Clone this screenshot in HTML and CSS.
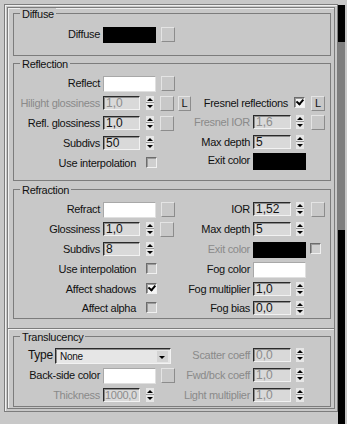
FILE: index.html
```html
<!DOCTYPE html>
<html>
<head>
<meta charset="utf-8">
<link rel="stylesheet" href="styles.css">
</head>
<body>
<div class="page">
  <div class="panel">
    <div class="outer">
      <div class="inner">

        <section class="group g-diffuse">
          <div class="legend">Diffuse</div>
          <div class="rows">
            <div class="cell"><span class="lab w86">Diffuse</span><span class="swatch black"></span><span class="mapbtn ml5"></span></div>
            <div class="cell"></div>
          </div>
        </section>

        <section class="group g-refl">
          <div class="legend">Reflection</div>
          <div class="rows">
            <div class="cell"><span class="lab w86">Reflect</span><span class="swatch white"></span><span class="mapbtn ml5"></span></div>
            <div class="cell"></div>

            <div class="cell"><span class="lab w86 dis">Hilight glossiness</span><span class="field dis">1,0</span><span class="spin ml6"></span><span class="mapbtn ml6"></span><span class="lbtn">L</span></div>
            <div class="cell"><span class="lab w95">Fresnel reflections</span><span class="cb checked ml6"></span><span class="lbtn r">L</span></div>

            <div class="cell"><span class="lab w86">Refl. glossiness</span><span class="field">1,0</span><span class="spin ml6"></span><span class="mapbtn ml6"></span></div>
            <div class="cell up1"><span class="lab w57 dis">Fresnel IOR</span><span class="field r dis">1,6</span><span class="spin ml5"></span><span class="mapbtn ml7"></span></div>

            <div class="cell"><span class="lab w86">Subdivs</span><span class="field">50</span><span class="spin ml6"></span></div>
            <div class="cell up1"><span class="lab w57">Max depth</span><span class="field r">5</span><span class="spin ml5"></span></div>

            <div class="cell"><span class="lab w122">Use interpolation</span><span class="cb ml10"></span></div>
            <div class="cell up3"><span class="lab w57">Exit color</span><span class="swatch black tall"></span></div>
          </div>
        </section>

        <section class="group g-refr">
          <div class="legend">Refraction</div>
          <div class="rows">
            <div class="cell"><span class="lab w86">Refract</span><span class="swatch white"></span><span class="mapbtn ml5"></span></div>
            <div class="cell"><span class="lab w57">IOR</span><span class="field r">1,52</span><span class="spin ml5"></span><span class="mapbtn ml7"></span></div>

            <div class="cell"><span class="lab w86">Glossiness</span><span class="field">1,0</span><span class="spin ml6"></span><span class="mapbtn ml6"></span></div>
            <div class="cell"><span class="lab w57">Max depth</span><span class="field r">5</span><span class="spin ml5"></span></div>

            <div class="cell"><span class="lab w86">Subdivs</span><span class="field">8</span><span class="spin ml6"></span></div>
            <div class="cell"><span class="lab w57 dis">Exit color</span><span class="swatch black"></span><span class="cb ml4"></span></div>

            <div class="cell"><span class="lab w122">Use interpolation</span><span class="cb ml10"></span></div>
            <div class="cell"><span class="lab w57">Fog color</span><span class="swatch white"></span></div>

            <div class="cell"><span class="lab w122">Affect shadows</span><span class="cb checked ml10"></span></div>
            <div class="cell"><span class="lab w57">Fog multiplier</span><span class="field r">1,0</span><span class="spin ml5"></span></div>

            <div class="cell up1"><span class="lab w122">Affect alpha</span><span class="cb ml10"></span></div>
            <div class="cell up1"><span class="lab w57">Fog bias</span><span class="field r">0,0</span><span class="spin ml5"></span></div>
          </div>
        </section>

        <div class="sep"></div>

        <section class="group g-trans">
          <div class="legend">Translucency</div>
          <div class="rows">
            <div class="cell"><span class="typelab">Type</span><span class="combo"><span class="combo-text">None</span><span class="combo-btn"></span></span></div>
            <div class="cell"><span class="lab w57 dis">Scatter coeff</span><span class="field r dis">0,0</span><span class="spin ml5"></span></div>

            <div class="cell"><span class="lab w86">Back-side color</span><span class="swatch white"></span><span class="mapbtn ml5"></span></div>
            <div class="cell"><span class="lab w57 dis">Fwd/bck coeff</span><span class="field r dis">1,0</span><span class="spin ml5"></span></div>

            <div class="cell"><span class="lab w86 dis">Thickness</span><span class="field dis small">1000,0</span><span class="spin ml6"></span></div>
            <div class="cell"><span class="lab w57 dis">Light multiplier</span><span class="field r dis">1,0</span><span class="spin ml5"></span></div>
          </div>
        </section>

      </div>
    </div>
  </div>
  <div class="scrollbar">
    <div class="sb-top"></div>
    <div class="sb-mid"></div>
    <div class="sb-bot"></div>
  </div>
</div>
</body>
</html>
```

FILE: styles.css
```css
* { box-sizing: border-box; }

html, body {
  margin: 0;
  padding: 0;
  background: #c8c8c8;
}

body {
  font-family: "Liberation Sans", Arial, sans-serif;
  font-size: 11px;
  letter-spacing: -0.3px;
  color: #111;
}

.page {
  display: flex;
  width: 347px;
  height: 424px;
  overflow: hidden;
}

.panel {
  width: 338px;
  padding: 4px 0 0 4px;
}

.outer {
  width: 334px;
  height: 408px;
  border: 1px solid #7c7c7c;
  box-shadow: inset 1px 1px 0 #f0f0f0;
  padding: 2px;
}

.inner {
  height: 100%;
  border: 1px solid #7c7c7c;
  box-shadow: inset 1px 1px 0 #f0f0f0;
  overflow: hidden;
}

.group {
  border: 1px solid #7c7c7c;
  margin: 0 3px 0 5px;
}

.g-diffuse { margin-top: 5px; }
.g-refl { margin-top: 7px; }
.g-refr { margin-top: 8px; }
.g-trans { margin-top: 7px; }

.legend {
  width: max-content;
  margin: -6px 0 0 6px;
  padding: 0 2px;
  line-height: 13px;
  height: 13px;
  background: #c8c8c8;
}

.rows {
  display: grid;
  grid-template-columns: 179px 137px;
  grid-auto-rows: 16px;
  row-gap: 4px;
}

.g-diffuse .rows { padding: 6px 0 12px; }
.g-refl .rows { padding: 5px 0 8px; }
.g-refr .rows { padding: 5px 0 0; }
.g-trans .rows { padding: 4px 0 2px; }

.sep {
  margin-top: 9px;
  border-top: 1px solid #7c7c7c;
  box-shadow: 0 1px 0 #f0f0f0;
}

.cell {
  display: flex;
  align-items: flex-start;
  height: 16px;
}

.up1 { margin-top: -1px; }
.up3 { margin-top: -3px; }

.lab {
  display: flex;
  justify-content: flex-end;
  flex: none;
  white-space: nowrap;
  line-height: 15px;
}

.w86 { width: 86px; margin-right: 3px; }
.w57 { width: 57px; margin-right: 3px; }
.w95 { width: 95px; }
.w122 { width: 122px; }

.dis { color: #8a8a8a; }

.swatch {
  flex: none;
  width: 53px;
  height: 16px;
  border: 1px solid #a8a8a8;
  border-right-color: #e0e0e0;
  border-bottom-color: #e0e0e0;
}
.swatch.black { background: #000; border-color: #000; }
.swatch.white { background: #fff; }
.swatch.tall { height: 17px; }

.mapbtn {
  flex: none;
  width: 14px;
  height: 15px;
  border: 1px solid;
  border-color: #e4e4e4 #8c8c8c #8c8c8c #e4e4e4;
  background: #c8c8c8;
}

.lbtn {
  flex: none;
  width: 13px;
  height: 15px;
  margin-left: 4px;
  border: 1px solid;
  border-color: #e4e4e4 #8c8c8c #8c8c8c #e4e4e4;
  line-height: 13px;
  text-align: center;
  letter-spacing: 0;
}
.lbtn.r { margin-left: 6px; width: 14px; }

.field {
  flex: none;
  width: 37px;
  height: 14px;
  border: 1px solid;
  border-color: #2a2a2a #f2f2f2 #f2f2f2 #2a2a2a;
  box-shadow: inset 1px 1px 0 #8c8c8c;
  background: #d9d9d9;
  padding-left: 2px;
  line-height: 12px;
  font-size: 12px;
  letter-spacing: 0;
  white-space: nowrap;
  overflow: hidden;
}
.field.r { width: 38px; }
.field.dis { color: #8c8c8c; }
.field.small { font-size: 11px; letter-spacing: -0.3px; padding-left: 1px; }

.spin {
  flex: none;
  width: 8px;
  height: 14px;
  background:
    linear-gradient(#9a9a9a, #9a9a9a) 0 6px / 8px 1px no-repeat,
    #e6e6e6;
  position: relative;
}
.spin::before,
.spin::after {
  content: "";
  position: absolute;
  left: 1px;
  border-left: 3px solid transparent;
  border-right: 3px solid transparent;
}
.spin::before { top: 2px; border-bottom: 3px solid #000; }
.spin::after { top: 9px; border-top: 3px solid #000; }

.cb {
  flex: none;
  width: 11px;
  height: 11px;
  margin-top: 1px;
  border: 1px solid;
  border-color: #6c6c6c #f0f0f0 #f0f0f0 #6c6c6c;
  box-shadow: inset 1px 1px 0 #9a9a9a;
  background: #cfcfcf;
  position: relative;
}
.cb.checked { background: #f4f4f4; }
.cb.checked::after {
  content: "";
  position: absolute;
  left: 2px;
  top: 1px;
  width: 5px;
  height: 3px;
  border-left: 2px solid #000;
  border-bottom: 2px solid #000;
  transform: rotate(-50deg);
  transform-origin: 3px 3px;
}

.ml4 { margin-left: 4px; }
.ml5 { margin-left: 5px; }
.ml6 { margin-left: 6px; }
.ml7 { margin-left: 7px; }
.ml10 { margin-left: 10px; }

.typelab {
  flex: none;
  margin-left: 14px;
  width: 27px;
  line-height: 14px;
  font-size: 12px;
}

.combo {
  flex: none;
  display: flex;
  width: 116px;
  height: 16px;
  border: 1px solid;
  border-color: #2a2a2a #f2f2f2 #f2f2f2 #2a2a2a;
  box-shadow: inset 1px 1px 0 #8c8c8c;
  background: #e6e6e6;
}
.combo-text {
  flex: 1;
  padding: 2px 0 0 4px;
  font-size: 10px;
  line-height: 12px;
}
.combo-btn {
  flex: none;
  width: 11px;
  margin: 2px 2px 1px 0;
  background: #d4d4d4;
  position: relative;
}
.combo-btn::after {
  content: "";
  position: absolute;
  left: 2px;
  top: 5px;
  border-left: 3px solid transparent;
  border-right: 3px solid transparent;
  border-top: 3px solid #000;
}

.scrollbar {
  width: 7px;
  display: flex;
  flex-direction: column;
  padding-top: 5px;
}
.sb-top { height: 37px; background: #000; }
.sb-mid { height: 188px; background: #7e7e7e; }
.sb-bot { flex: 1; background: #000; }
```
